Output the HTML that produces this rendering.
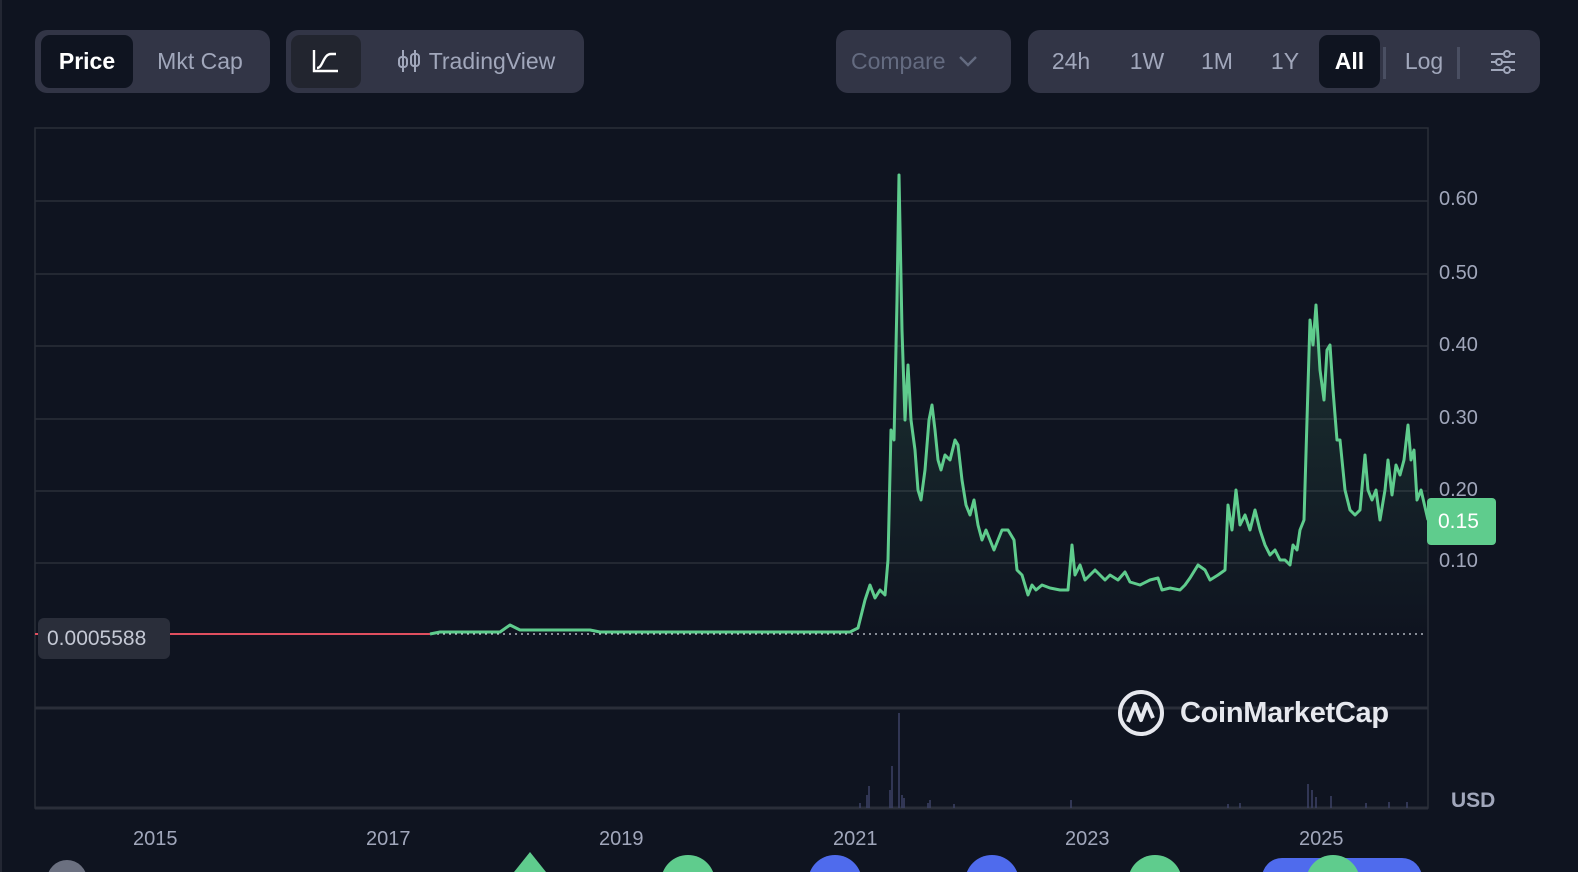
<!DOCTYPE html>
<html><head><style>
body{margin:0;width:1578px;height:872px;background:#0f1420;overflow:hidden;font-family:"Liberation Sans",sans-serif;position:relative}
.grp{position:absolute;top:30px;height:63px;background:#323546;border-radius:12px}
.btn{position:absolute;top:5px;height:53px;line-height:53px;font-size:23px;color:#a1a7bb;text-align:center}
.act{background:#0f1420;border-radius:9px;color:#fff;font-weight:bold}
.yl{position:absolute;left:1439px;font-size:20px;color:#a1a7bb}
.xl{position:absolute;top:828px;font-size:20px;color:#a1a7bb}
</style></head><body>
<div style="position:absolute;left:0;top:0;width:2px;height:872px;background:#232733"></div>
<div class="grp" style="left:35px;width:235px">
 <div class="btn act" style="left:6px;width:92px">Price</div>
 <div class="btn" style="left:105px;width:120px">Mkt Cap</div>
</div>
<div class="grp" style="left:286px;width:298px">
 <div class="btn" style="left:5px;width:70px;background:#22252f;border-radius:9px">
  <svg width="30" height="26" viewBox="0 0 30 26" style="margin-top:13px"><path d="M3 2V23H27M6 20C12 20 12 6 20 6H25" stroke="#fff" stroke-width="2.4" fill="none"/></svg></div>
 <div class="btn" style="left:95px;width:190px;color:#a1a7bb">
  <svg width="26" height="24" viewBox="0 0 26 24" style="vertical-align:-4px"><path d="M6 1V23M18 1V23" stroke="#a1a7bb" stroke-width="2"/><rect x="2" y="8" width="8" height="10" rx="3" stroke="#a1a7bb" stroke-width="2" fill="none"/><rect x="14" y="5" width="8" height="12" rx="3" stroke="#a1a7bb" stroke-width="2" fill="none"/></svg> TradingView</div>
</div>
<div class="grp" style="left:836px;width:175px">
 <div class="btn" style="left:15px;color:#646b80">Compare <svg width="20" height="12" viewBox="0 0 20 12" style="vertical-align:2px;margin-left:6px"><path d="M2 2L10 10L18 2" stroke="#646b80" stroke-width="2.4" fill="none"/></svg></div>
</div>
<div class="grp" style="left:1028px;width:512px">
 <div class="btn" style="left:12px;width:62px">24h</div>
 <div class="btn" style="left:88px;width:62px">1W</div>
 <div class="btn" style="left:158px;width:62px">1M</div>
 <div class="btn" style="left:226px;width:62px">1Y</div>
 <div class="btn act" style="left:291px;width:61px">All</div>
 <div style="position:absolute;left:355px;top:17px;width:3px;height:32px;background:#4a4f62"></div>
 <div class="btn" style="left:365px;width:62px">Log</div>
 <div style="position:absolute;left:429px;top:17px;width:3px;height:32px;background:#4a4f62"></div>
 <svg style="position:absolute;left:460px;top:18px" width="30" height="28" viewBox="0 0 30 28"><g stroke="#a1a7bb" stroke-width="2" fill="#323546"><path d="M3 6H27M3 14H27M3 22H27"/><circle cx="19" cy="6" r="3"/><circle cx="11" cy="14" r="3"/><circle cx="19" cy="22" r="3"/></g></svg>
</div>

<svg style="position:absolute;left:0;top:0" width="1578" height="872">
 <defs><linearGradient id="g" x1="0" y1="0" x2="0" y2="1"><stop offset="0" stop-color="#5fcc8d" stop-opacity="0.22"/><stop offset="1" stop-color="#5fcc8d" stop-opacity="0"/></linearGradient></defs>
 <rect x="35" y="128" width="1393" height="680" fill="none" stroke="#2a2e39" stroke-width="1.5"/>
 <g stroke="#2a2e39" stroke-width="1.5">
  <line x1="35" y1="201" x2="1428" y2="201"/><line x1="35" y1="274" x2="1428" y2="274"/><line x1="35" y1="346" x2="1428" y2="346"/><line x1="35" y1="419" x2="1428" y2="419"/><line x1="35" y1="491" x2="1428" y2="491"/><line x1="35" y1="563" x2="1428" y2="563"/>
 </g>
 <line x1="35" y1="708" x2="1428" y2="708" stroke="#2a2e39" stroke-width="3"/>
 <line x1="35" y1="808" x2="1428" y2="808" stroke="#2a2e39" stroke-width="3"/>
 <g stroke="#3d4266" stroke-width="1.5">
  <line x1="899" y1="808" x2="899" y2="713"/><line x1="892" y1="808" x2="892" y2="766"/><line x1="890" y1="808" x2="890" y2="790"/><line x1="869" y1="808" x2="869" y2="786"/><line x1="867" y1="808" x2="867" y2="795"/><line x1="902" y1="808" x2="902" y2="795"/><line x1="904" y1="808" x2="904" y2="798"/><line x1="930" y1="808" x2="930" y2="800"/><line x1="928" y1="808" x2="928" y2="803"/><line x1="954" y1="808" x2="954" y2="804"/><line x1="1071" y1="808" x2="1071" y2="800"/><line x1="1308" y1="808" x2="1308" y2="784"/><line x1="1312" y1="808" x2="1312" y2="790"/><line x1="1316" y1="808" x2="1316" y2="797"/><line x1="1331" y1="808" x2="1331" y2="796"/><line x1="1240" y1="808" x2="1240" y2="803"/><line x1="1228" y1="808" x2="1228" y2="804"/><line x1="1389" y1="808" x2="1389" y2="802"/><line x1="1407" y1="808" x2="1407" y2="802"/><line x1="1366" y1="808" x2="1366" y2="803"/><line x1="860" y1="808" x2="860" y2="803"/>
 </g>
 <line x1="35" y1="634" x2="1425" y2="634" stroke="#cfd3dc" stroke-width="1.2" stroke-dasharray="2 4"/>
 <line x1="35" y1="634" x2="430" y2="634" stroke="#e04f5f" stroke-width="2"/>
 <polyline fill="url(#g)" stroke="none" points="430,634 440,632 500,632 510,625 520,630 590,630 600,632 850,632 858,628 865,600 870,585 875,598 880,590 885,595 888,560 891,430 894,440 897,300 899,175 902,330 905,420 908,365 911,420 915,450 918,490 921,500 925,470 929,420 932,405 935,430 938,460 941,470 945,455 950,460 955,440 958,445 962,480 966,505 970,515 974,500 978,525 982,540 986,530 990,540 994,550 998,540 1002,530 1008,530 1014,540 1017,570 1022,575 1028,595 1032,585 1036,590 1042,585 1050,588 1060,590 1068,590 1072,545 1075,575 1080,565 1085,580 1090,575 1095,570 1100,575 1105,580 1110,575 1118,580 1125,572 1130,582 1140,585 1150,580 1158,578 1162,590 1170,588 1180,590 1185,585 1190,578 1198,565 1205,570 1210,580 1218,575 1225,570 1228,505 1232,530 1236,490 1240,525 1245,515 1250,530 1255,510 1260,530 1265,545 1270,555 1275,550 1280,560 1285,560 1290,565 1293,545 1297,550 1300,530 1304,520 1307,420 1310,320 1313,345 1316,305 1320,370 1324,400 1327,350 1330,345 1333,390 1337,440 1340,440 1345,490 1350,510 1355,515 1360,510 1365,455 1368,490 1372,500 1376,490 1380,520 1385,490 1388,460 1392,495 1396,465 1400,475 1404,460 1408,425 1411,460 1414,450 1417,500 1421,490 1428,520 1428,634"/>
 <polyline fill="none" stroke="#5fcc8d" stroke-width="3" stroke-linejoin="round" points="430,634 440,632 500,632 510,625 520,630 590,630 600,632 850,632 858,628 865,600 870,585 875,598 880,590 885,595 888,560 891,430 894,440 897,300 899,175 902,330 905,420 908,365 911,420 915,450 918,490 921,500 925,470 929,420 932,405 935,430 938,460 941,470 945,455 950,460 955,440 958,445 962,480 966,505 970,515 974,500 978,525 982,540 986,530 990,540 994,550 998,540 1002,530 1008,530 1014,540 1017,570 1022,575 1028,595 1032,585 1036,590 1042,585 1050,588 1060,590 1068,590 1072,545 1075,575 1080,565 1085,580 1090,575 1095,570 1100,575 1105,580 1110,575 1118,580 1125,572 1130,582 1140,585 1150,580 1158,578 1162,590 1170,588 1180,590 1185,585 1190,578 1198,565 1205,570 1210,580 1218,575 1225,570 1228,505 1232,530 1236,490 1240,525 1245,515 1250,530 1255,510 1260,530 1265,545 1270,555 1275,550 1280,560 1285,560 1290,565 1293,545 1297,550 1300,530 1304,520 1307,420 1310,320 1313,345 1316,305 1320,370 1324,400 1327,350 1330,345 1333,390 1337,440 1340,440 1345,490 1350,510 1355,515 1360,510 1365,455 1368,490 1372,500 1376,490 1380,520 1385,490 1388,460 1392,495 1396,465 1400,475 1404,460 1408,425 1411,460 1414,450 1417,500 1421,490 1428,520"/>
 <g transform="translate(1118,690)"><circle cx="23" cy="23" r="21" fill="none" stroke="#e6e8ee" stroke-width="4"/><path d="M10 32L17 14L23 30L29 14L35 28" fill="none" stroke="#e6e8ee" stroke-width="4" stroke-linejoin="round"/></g>
 <circle cx="67" cy="880" r="20" fill="#6b7080"/>
 <g fill="#5fcc8d"><path d="M514 872L530 852L546 872Z"/><circle cx="688" cy="882" r="27"/><circle cx="1155" cy="882" r="27"/></g>
 <g fill="#4f6bed"><circle cx="835" cy="882" r="27"/><circle cx="992" cy="882" r="27"/><rect x="1262" y="858" width="160" height="40" rx="20"/></g>
 <circle cx="1333" cy="882" r="27" fill="#5fcc8d"/>
</svg>
<div style="position:absolute;left:1180px;top:697px;font-size:29px;font-weight:bold;color:#e6e8ee;letter-spacing:-0.3px">CoinMarketCap</div>
<div class="yl" style="top:188px">0.60</div><div class="yl" style="top:262px">0.50</div><div class="yl" style="top:334px">0.40</div><div class="yl" style="top:407px">0.30</div><div class="yl" style="top:479px">0.20</div><div class="yl" style="top:550px">0.10</div>
<div style="position:absolute;left:1427px;top:498px;width:69px;height:47px;background:#5fcc8d;border-radius:4px;color:#fff;font-size:21px;line-height:47px;text-indent:11px">0.15</div>
<div style="position:absolute;left:38px;top:618px;width:132px;height:41px;background:#2a2e3a;border-radius:6px;color:#c4c8d4;font-size:21px;line-height:41px;text-indent:9px">0.0005588</div>
<div style="position:absolute;left:1451px;top:789px;font-size:21px;font-weight:bold;color:#a1a7bb">USD</div>
<div class="xl" style="left:133px">2015</div><div class="xl" style="left:366px">2017</div><div class="xl" style="left:599px">2019</div><div class="xl" style="left:833px">2021</div><div class="xl" style="left:1065px">2023</div><div class="xl" style="left:1299px">2025</div>
</body></html>
